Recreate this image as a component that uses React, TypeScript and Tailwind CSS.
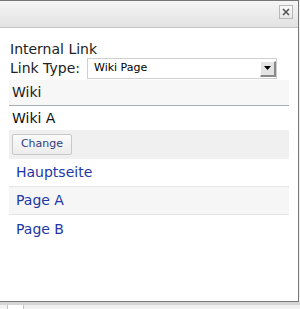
export default function App() {
  const pages = ["Hauptseite", "Page A", "Page B"];
  return (
    <div
      className="w-[300px] h-[309px] bg-[#f2f2f2] flex flex-col overflow-hidden"
      style={{ fontFamily: '"DejaVu Sans", Verdana, sans-serif' }}
    >
      <div className="w-[299px] h-[302px] shrink-0 bg-white border-t border-r border-b border-[#767676] flex flex-col">
        {/* title bar */}
        <div className="h-[27px] shrink-0 border-b border-[#c4c4c4] bg-gradient-to-b from-[#f6f6f6] to-[#e2e2e2] flex items-start justify-end pr-[5px] pt-[4px]">
          <button className="w-[14px] h-[14px] border border-[#b8b8b8] bg-gradient-to-b from-[#fafafa] to-[#e6e6e6] flex items-center justify-center">
            <svg width="8" height="8" viewBox="0 0 8 8">
              <path d="M1 1 L7 7 M7 1 L1 7" stroke="#555" strokeWidth="1.6" />
            </svg>
          </button>
        </div>

        {/* body */}
        <div className="pt-[13px] pl-[9px] pr-[9px] flex flex-col">
          <div className="pl-[1px] text-[14px] leading-[17px] text-[#222]">Internal Link</div>
          <div className="flex items-center h-[21px] pl-[1px]">
            <span className="text-[14px] leading-[17px] text-[#222]">Link Type:</span>
            <div className="ml-[7px] w-[190px] h-[21px] border border-[#d0d0d0] bg-white flex items-center justify-between pl-[6px] pr-[0px]">
              <span className="text-[11px] text-black">Wiki Page</span>
              <div className="w-[16px] h-[16px] mr-[0px] bg-[#e4e4e4] border-t border-l border-white border-r-2 border-b-2 border-r-[#8a8a8a] border-b-[#8a8a8a] flex items-center justify-center">
                <svg width="7" height="4" viewBox="0 0 7 4">
                  <path d="M0 0 H7 L3.5 4 Z" fill="#000" />
                </svg>
              </div>
            </div>
          </div>

          <div className="mt-[1px] h-[26px] bg-[#f7f7f7] border-b border-[#a8aeb4] flex items-center pl-[3px] text-[14px] text-[#222]">
            Wiki
          </div>
          <div className="h-[24px] flex items-center pl-[3px] text-[14px] text-[#111]">Wiki A</div>
          <div className="h-[29px] bg-[#f0f0f0] flex items-center pl-[3px]">
            <button className="h-[21px] w-[60px] rounded-[2px] border border-[#c8c8c8] bg-gradient-to-b from-[#fbfbfb] to-[#ececec] text-[11px] text-[#2e3d7c]">
              Change
            </button>
          </div>

          {pages.map((p, i) => (
            <div
              key={p}
              className={`h-[28px] flex items-center pl-[7px] text-[14px] text-[#2236a8] ${
                i % 2 === 1 ? "bg-[#f6f6f6]" : "bg-white"
              } ${i < pages.length - 1 ? "border-b border-[#e6e6e6]" : ""}`}
            >
              {p}
            </div>
          ))}
        </div>
      </div>

      {/* page behind the dialog */}
      <div className="flex-1 flex flex-col">
        <div className="h-[3px] bg-[#d6d6d6]" />
        <div className="flex-1 flex">
          <div className="w-[8px] border-r border-[#c4c4c4]" />
          <div className="w-[16px] bg-white border-r border-[#c4c4c4]" />
          <div className="flex-1 bg-[#f0f0f0]" />
        </div>
      </div>
    </div>
  );
}
